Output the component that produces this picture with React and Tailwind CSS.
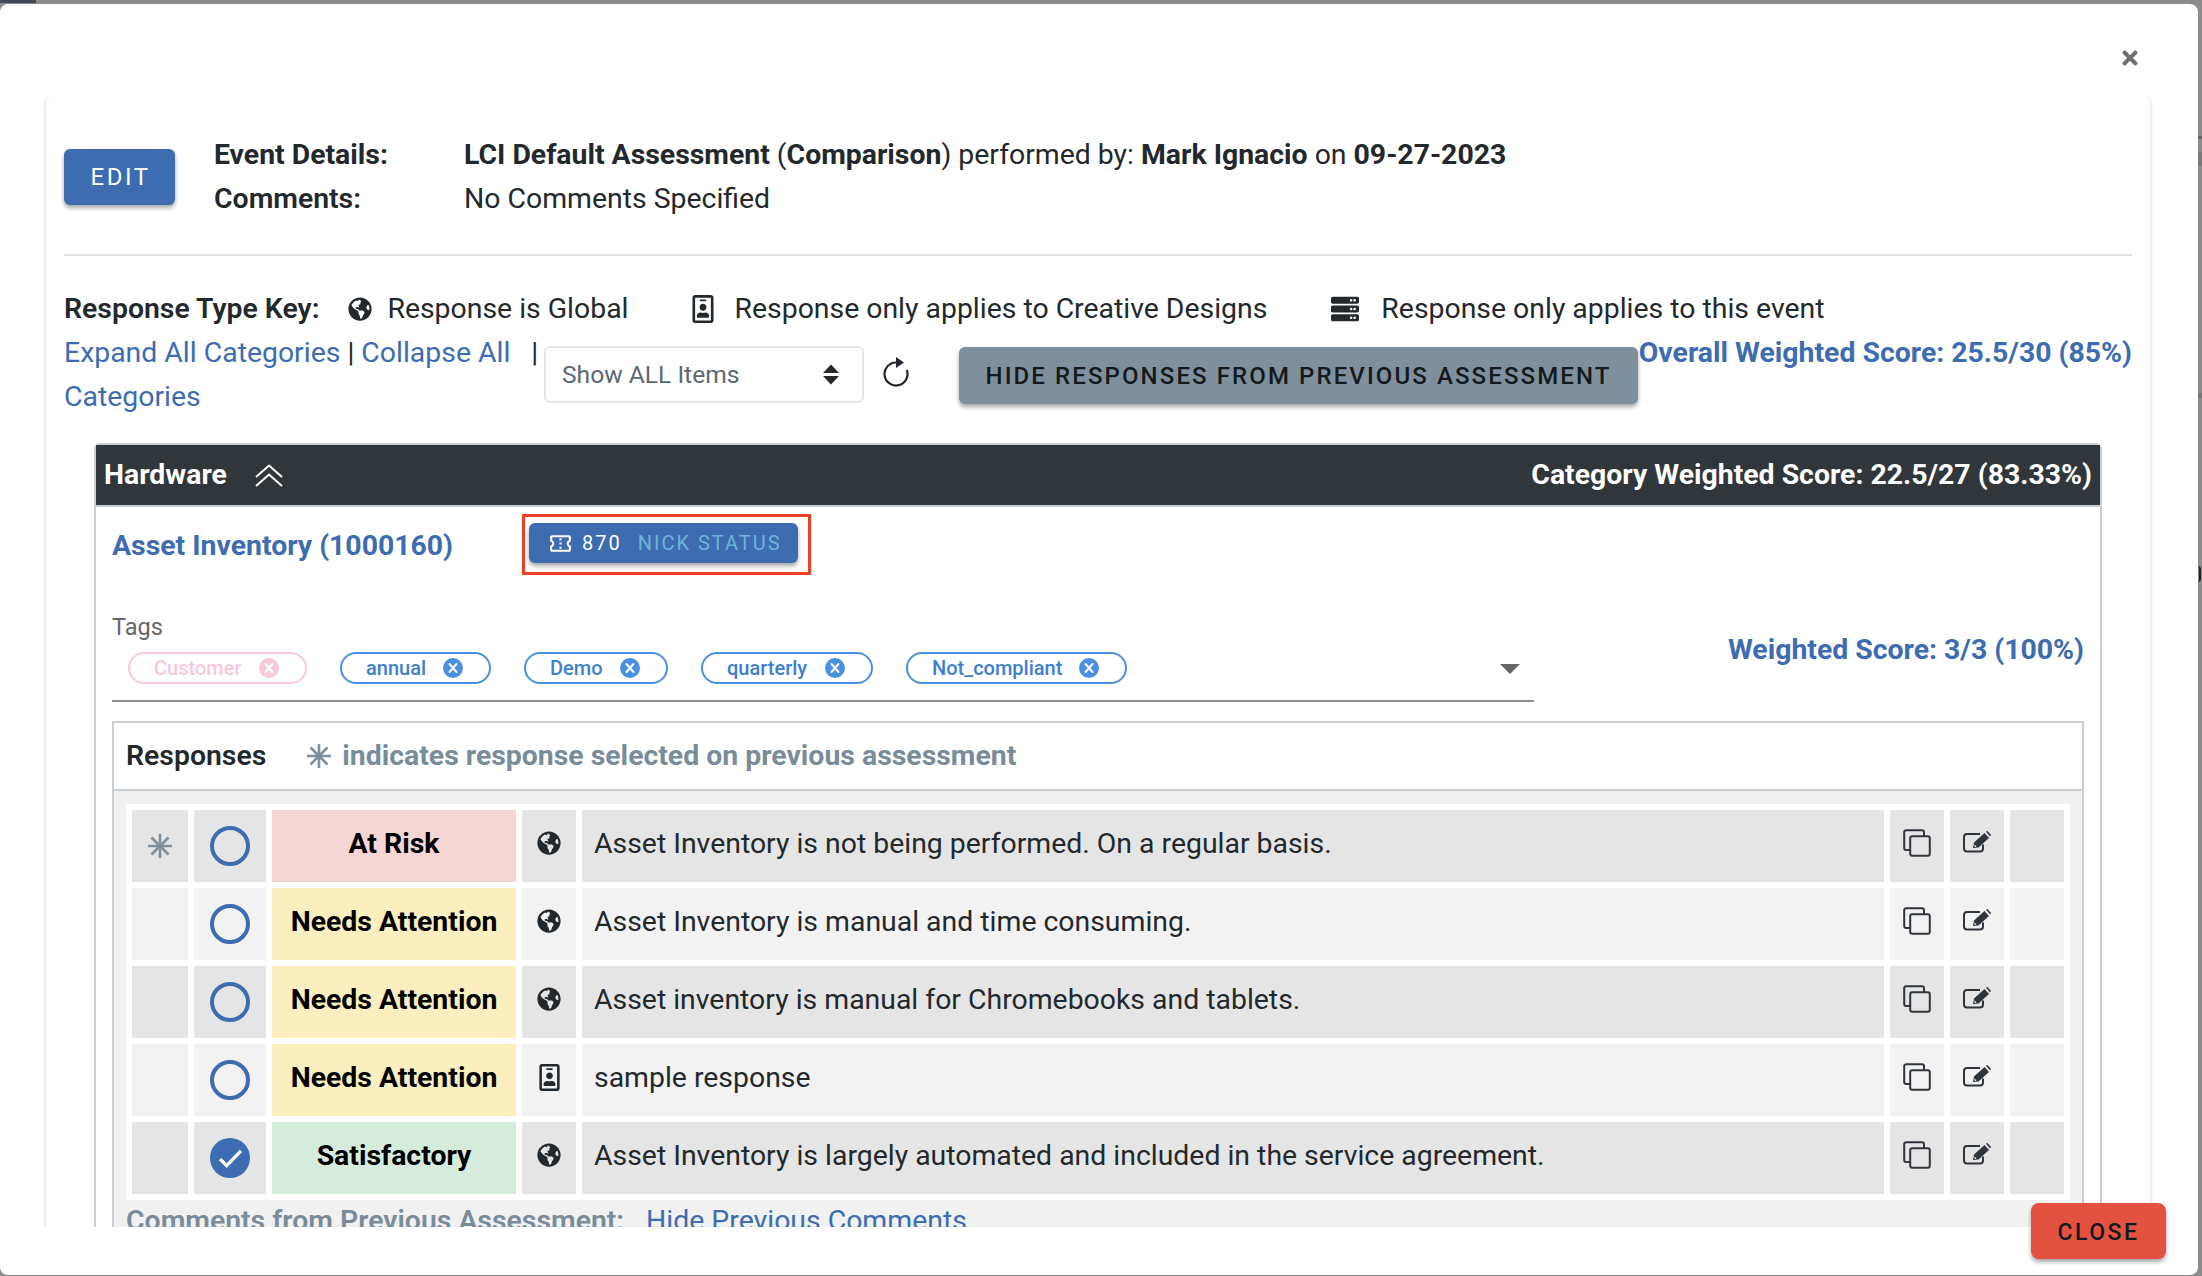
import React from "react";
import { FaGlobeAmericas, FaRegIdBadge, FaServer, FaTimes } from "react-icons/fa";
import { MdOutlineConfirmationNumber } from "react-icons/md";

const rows = [
  { prev: true, checked: false, rating: "At Risk", tone: "bg-[#f6d5d5]", type: "global", text: "Asset Inventory is not being performed. On a regular basis." },
  { prev: false, checked: false, rating: "Needs Attention", tone: "bg-[#fbefbf]", type: "global", text: "Asset Inventory is manual and time consuming." },
  { prev: false, checked: false, rating: "Needs Attention", tone: "bg-[#fbefbf]", type: "global", text: "Asset inventory is manual for Chromebooks and tablets." },
  { prev: false, checked: false, rating: "Needs Attention", tone: "bg-[#fbefbf]", type: "badge", text: "sample response" },
  { prev: false, checked: true, rating: "Satisfactory", tone: "bg-[#d5ebdc]", type: "global", text: "Asset Inventory is largely automated and included in the service agreement." },
];

const tags = [
  { name: "Customer", faded: true, width: "w-[179px]" },
  { name: "annual", width: "w-[151px]" },
  { name: "Demo", width: "w-[144px]" },
  { name: "quarterly", width: "w-[172px]" },
  { name: "Not_compliant", width: "w-[221px]" },
];

function Snowflake({ className }) {
  return (
    <svg viewBox="0 0 24 24" className={className} fill="none" stroke="currentColor" strokeWidth="2.6">
      <path d="M12 0v24M0 12h24M3.5 3.5l17 17M20.500 3.500l-17 17" />
    </svg>
  );
}

function CopyIcon({ className }) {
  return (
    <svg viewBox="0 0 28 28" className={className} fill="none" stroke="currentColor" strokeWidth="2" strokeLinejoin="round">
      <rect x="7.200" y="7.200" width="19.600" height="19.600" rx="2" />
      <path d="M7 21H3.200a2 2 0 0 1-2-2V3.200a2 2 0 0 1 2-2H19a2 2 0 0 1 2 2V7" />
    </svg>
  );
}

function EditIcon({ className }) {
  return (
    <svg viewBox="0 0 28 22" className={className}>
      <path d="M20 13.500V17.500a3 3 0 0 1-3 3H4a3 3 0 0 1-3-3V6a3 3 0 0 1 3-3h13" fill="none" stroke="currentColor" strokeWidth="2" />
      <path d="M10 17l1-5.500L21.500 2l4.500 5L15.500 16.500z" fill="currentColor" />
      <path d="M23 0.500l1.500-0.500 3.500 4-1 1.500z" fill="currentColor" />
      <path d="M11.800 16l-.6-2.800 2.400 2.400z" fill="#fff" />
    </svg>
  );
}

function RefreshIcon({ className }) {
  return (
    <svg viewBox="0 0 26 30" className={className}>
      <path d="M13 5.500A11.500 11.500 0 1 0 23.800 13" fill="none" stroke="currentColor" strokeWidth="2.200" />
      <path d="M13 0l8 5.500-8 5.500z" fill="currentColor" />
    </svg>
  );
}

function DoubleUp({ className }) {
  return (
    <svg viewBox="0 0 28 23" className={className} fill="none" stroke="currentColor" strokeWidth="2">
      <path d="M1 13L14 1.500 27 13M1 22L14 10.500 27 22" />
    </svg>
  );
}

function ChipX({ className }) {
  return (
    <svg viewBox="0 0 20 20" className={className}>
      <circle cx="10" cy="10" r="10" fill="currentColor" />
      <path d="M6.500 6l7 8M13.500 6l-7 8" stroke="#fff" strokeWidth="2" strokeLinecap="round" />
    </svg>
  );
}

function TypeIcon({ type }) {
  if (type === "badge") return <FaRegIdBadge className="text-[27px] text-[#23282c]" />;
  return <FaGlobeAmericas className="text-[24px] text-[#23282c]" />;
}

function Tag({ name, faded, width }) {
  return (
    <span className={`flex h-[32px] items-center justify-between rounded-full border-2 pl-[24px] pr-[26px] text-[20px] font-medium ${width} ${faded ? "border-[#f8c8dc] text-[#f8c8dc]" : "border-[#4a90e2] text-[#3d7fd0]"}`}>
      {name}
      <ChipX className={`h-[20px] w-[20px] ${faded ? "text-[#f8c8dc]" : "text-[#4a90e2]"}`} />
    </span>
  );
}

function ResponseRow({ row, index }) {
  const bg = index % 2 === 0 ? "bg-[#e5e5e5]" : "bg-[#f2f2f2]";
  return (
    <tr className="h-[72px]">
      <td className={`${bg} w-[56px]`}>
        {row.prev && <Snowflake className="mx-auto h-[24px] w-[24px] text-[#7f909c]" />}
      </td>
      <td className={`${bg} w-[72px]`}>
        {row.checked ? (
          <span className="mx-auto flex h-[40px] w-[40px] items-center justify-center rounded-full bg-[#3d6cb0]">
            <svg viewBox="0 0 26 20" className="h-[19px] w-[25px]" fill="none" stroke="#fff" strokeWidth="3.500"><path d="M2 10.500L9 17.500 24 2" /></svg>
          </span>
        ) : (
          <span className="mx-auto block h-[40px] w-[40px] rounded-full border-4 border-[#3d6cb0]" />
        )}
      </td>
      <td className={`${row.tone} w-[244px] pb-[5px] text-center font-bold text-black`}>{row.rating}</td>
      <td className={`${bg} w-[54px]`}>
        <div className="flex justify-center pb-[6px]"><TypeIcon type={row.type} /></div>
      </td>
      <td className={`${bg} pb-[5px] pl-[12px]`}>{row.text}</td>
      <td className={`${bg} w-[54px]`}>
        <div className="flex justify-center pb-[6px]"><CopyIcon className="h-[28px] w-[28px] text-[#2f353a]" /></div>
      </td>
      <td className={`${bg} w-[54px]`}>
        <div className="flex justify-center pb-[9px]"><EditIcon className="h-[22px] w-[28px] text-[#2f353a]" /></div>
      </td>
      <td className={`${bg} w-[54px]`} />
    </tr>
  );
}

export default function App() {
  return (
    <div className="relative h-[1276px] w-[2202px] overflow-hidden bg-[#8c8c8c] pt-[4px] font-['Roboto',sans-serif] text-[28.4px] leading-[44px] text-[#23282c]">
      {/* page behind the modal, showing at the edges */}
      <div className="absolute left-0 top-0 h-[3px] w-[36px] bg-[#3f4a57]" />
      <div className="absolute right-0 top-[136px] h-[3px] w-[4px] bg-[#666]" />
      <div className="absolute right-0 top-[152px] h-[14px] w-[4px] bg-[#7a7a7a]" />
      <div className="absolute right-0 top-[393px] h-[5px] w-[4px] bg-[#777]" />
      <div className="absolute right-[1px] top-[566px] h-[16px] w-[3px] rounded-r-full border-r-2 border-[#222]" />

      <div className="flex h-[1271px] w-[2198px] flex-col rounded-[8px] bg-white">
        {/* Modal header */}
        <div className="flex h-[93px] shrink-0 justify-end pr-[57px] pt-[43px]">
          <FaTimes className="text-[22px] text-[#6f6f6f]" />
        </div>

        {/* Scroll area, cuts the card off above the footer */}
        <div className="min-h-0 flex-1 overflow-hidden pl-[46px] pr-[48px]">
          <div className="h-[1300px] rounded-t-[6px] pl-[18px] pr-[18px] pt-[36px] shadow-[0_1px_4px_rgba(0,0,0,0.2)]">
            <div className="flex items-center">
              <button className="h-[56px] w-[111px] rounded-[6px] bg-[#3d6cb0] pl-[2px] text-[24px] tracking-[2.5px] text-white shadow-[0_3px_4px_rgba(0,0,0,0.35)]">EDIT</button>
              <div className="ml-[39px] grid grid-cols-[250px_1fr]">
                <b className="font-bold">Event Details:</b>
                <span>
                  <b className="font-bold">LCI Default Assessment</b> (<b className="font-bold">Comparison</b>) performed by: <b className="font-bold">Mark Ignacio</b> on <b className="font-bold">09-27-2023</b>
                </span>
                <b className="font-semibold">Comments:</b>
                <span>No Comments Specified</span>
              </div>
            </div>

            <hr className="mt-[33px] border-t-2 border-[#e4e5e6]" />

            <div className="mt-[31px] flex items-center">
              <b className="font-semibold">Response Type Key:</b>
              <FaGlobeAmericas className="ml-[29px] text-[24px] text-[#23282c]" />
              <span className="ml-[15px]">Response is Global</span>
              <FaRegIdBadge className="ml-[61px] text-[28px] text-[#23282c]" />
              <span className="ml-[17px]">Response only applies to Creative Designs</span>
              <FaServer className="ml-[64px] text-[28px] text-[#23282c]" />
              <span className="ml-[22px]">Response only applies to this event</span>
            </div>

            <div className="flex">
              <div className="w-[478px] text-[#3d6cb0]">
                Expand All Categories <span className="text-[#23282c]">|</span> Collapse All <span className="ml-[14px] text-[#23282c]">|</span> Categories
              </div>
              <div className="ml-[2px] mt-[15px] flex h-[57px] w-[320px] items-center justify-between rounded-[6px] border-2 border-[#e4e7ea] pl-[16px] pr-[6px] text-[24.6px] text-[#5c6873]">
                Show ALL Items
                <svg viewBox="0 0 16 20" className="mr-[17px] h-[21px] w-[16px] fill-[#23282c]"><path d="M8 0l8 8.500H0zM8 20L0 11.500h16z" /></svg>
              </div>
              <RefreshIcon className="ml-[19px] mt-[26px] h-[30px] w-[26px] text-[#23282c]" />
              <button className="ml-[50px] mt-[16px] h-[57px] w-[679px] shrink-0 rounded-[6px] bg-[#7f909c] text-[24px] font-medium tracking-[2.1px] text-[#15191c] shadow-[0_3px_4px_rgba(0,0,0,0.35)]">HIDE RESPONSES FROM PREVIOUS ASSESSMENT</button>
              <div className="flex-1 whitespace-nowrap text-right font-bold text-[#3d6cb0]">Overall Weighted Score: 25.5/30 (85%)</div>
            </div>

            {/* Category panel */}
            <div className="ml-[30px] mr-[30px] mt-[24px] h-[900px] rounded-t-[6px] border-2 border-[#c8ced3]">
              <div className="flex h-[62px] items-center justify-between border-b-2 border-[#c8ced3] bg-[#31363b] pl-[8px] pr-[8px] font-bold text-white">
                <span className="flex items-center">
                  Hardware
                  <DoubleUp className="ml-[28px] h-[23px] w-[28px]" />
                </span>
                <span>Category Weighted Score: 22.5/27 (83.33%)</span>
              </div>

              <div className="pl-[16px] pr-[16px]">
                <div className="flex h-[83px] items-start">
                  <div className="mt-[17px] w-[410px] font-bold text-[#3d6cb0]">Asset Inventory (1000160)</div>
                  <div className="mt-[7px] border-[3px] border-[#ee3f24] pb-[9px] pl-[4px] pr-[10px] pt-[6px]">
                    <div className="flex h-[40px] w-[269px] items-center rounded-[6px] bg-[#3d6cb0] pl-[19px] text-[20px] tracking-[2px] text-white shadow-[0_3px_4px_rgba(0,0,0,0.35)]">
                      <MdOutlineConfirmationNumber className="text-[25px]" />
                      <span className="ml-[9px]">870</span>
                      <span className="ml-[16px] text-[#6cb4d8]">NICK STATUS</span>
                    </div>
                  </div>
                </div>

                <div className="flex">
                  <div className="w-[1422px]">
                    <div className="mt-[22px] text-[23.5px] leading-[30px] text-[#666]">Tags</div>
                    <div className="relative mt-[10px] flex h-[50px] gap-[33px] border-b-2 border-[#8c8c8c] pl-[16px]">
                      {tags.map((t) => <Tag key={t.name} {...t} />)}
                      <svg viewBox="0 0 20 10" className="absolute right-[14px] top-[12px] h-[10px] w-[20px] fill-[#666]"><path d="M0 0h20L10 10z" /></svg>
                    </div>
                  </div>
                  <div className="flex-1 whitespace-nowrap pt-[38px] text-right font-bold text-[#3d6cb0]">Weighted Score: 3/3 (100%)</div>
                </div>

                <div className="mt-[19px] border-2 border-[#c8ced3]">
                  <div className="flex h-[68px] items-center border-b-2 border-[#c8ced3] pl-[12px]">
                    <b className="font-semibold">Responses</b>
                    <Snowflake className="ml-[41px] h-[24px] w-[24px] text-[#7f909c]" />
                    <span className="ml-[11px] font-bold text-[#7a8b99]">indicates response selected on previous assessment</span>
                  </div>
                  <div className="bg-[#f1f1f1] px-[12px] pt-[13px]">
                    <table className="w-[1944px] border-separate border-spacing-[6px] bg-white">
                      <tbody>
                        {rows.map((row, i) => <ResponseRow key={i} row={row} index={i} />)}
                      </tbody>
                    </table>
                    <div className="mt-[6px] font-semibold leading-[30px] text-[#7a8b99]">
                      Comments from Previous Assessment:
                      <span className="ml-[22px] font-normal text-[#3d6cb0]">Hide Previous Comments</span>
                    </div>
                  </div>
                </div>
              </div>
            </div>
          </div>
        </div>

        {/* Footer */}
        <div className="h-[48px] shrink-0" />
      </div>
      <button className="absolute left-[2031px] top-[1203px] h-[56px] w-[135px] rounded-[8px] bg-[#e35241] pt-[3px] text-[23px] font-medium tracking-[2.5px] text-[#15191c] shadow-[0_3px_4px_rgba(0,0,0,0.35)]">CLOSE</button>
    </div>
  );
}
